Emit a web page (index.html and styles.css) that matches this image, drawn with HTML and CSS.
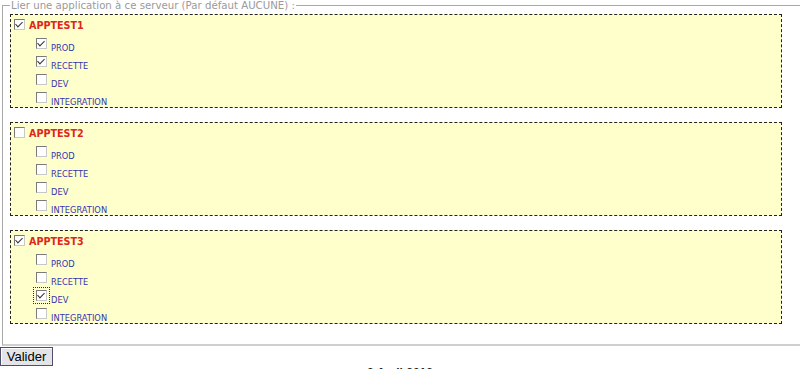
FILE: index.html
```html
<!DOCTYPE html>
<html lang="fr">
<head>
  <meta charset="UTF-8">
  <title>Lier une application</title>
  <link rel="stylesheet" href="styles.css">
</head>
<body>
  <form action="/serveur/apps" method="POST">
    <fieldset class="apps">
      <legend>Lier une application à ce serveur (Par défaut AUCUNE) :</legend>

      <div class="app">
        <label class="row app-title"><input type="checkbox" checked><span>APPTEST1</span></label>
        <div class="envs">
          <label class="row env"><input type="checkbox" checked><span>PROD</span></label>
          <label class="row env"><input type="checkbox" checked><span>RECETTE</span></label>
          <label class="row env"><input type="checkbox"><span>DEV</span></label>
          <label class="row env"><input type="checkbox"><span>INTEGRATION</span></label>
        </div>
      </div>

      <div class="app">
        <label class="row app-title"><input type="checkbox"><span>APPTEST2</span></label>
        <div class="envs">
          <label class="row env"><input type="checkbox"><span>PROD</span></label>
          <label class="row env"><input type="checkbox"><span>RECETTE</span></label>
          <label class="row env"><input type="checkbox"><span>DEV</span></label>
          <label class="row env"><input type="checkbox"><span>INTEGRATION</span></label>
        </div>
      </div>

      <div class="app">
        <label class="row app-title"><input type="checkbox" checked><span>APPTEST3</span></label>
        <div class="envs">
          <label class="row env"><input type="checkbox"><span>PROD</span></label>
          <label class="row env"><input type="checkbox"><span>RECETTE</span></label>
          <label class="row env"><input type="checkbox" class="focused" checked><span>DEV</span></label>
          <label class="row env"><input type="checkbox"><span>INTEGRATION</span></label>
        </div>
      </div>
    </fieldset>
    <input class="submit-button" type="submit" value="Valider">
  </form>
  <div class="footer">2 Avril 2013</div>
</body>
</html>
```

FILE: styles.css
```css
body {
  margin: 0;
  font-family: "DejaVu Sans", Verdana, sans-serif;
  background-color: #fff;
}
form {
  margin: 0;
}
.apps {
  margin: 0 0 0 2px;
  padding: 3px 18px 20px 7px;
  border: 1px solid #a8a8a8;
  border-right: none;
  border-bottom: 2px solid #cfcfcf;
  display: flex;
  flex-direction: column;
  gap: 14px;
}
.apps legend {
  padding: 0 1px;
  font-size: 10.2px;
  line-height: 11px;
  color: #9a9a9a;
}
.app {
  border: 1px dashed #222;
  background-color: #ffffcc;
  padding: 4px 2px 0 3px;
  height: 88px;
}
.row {
  display: flex;
  align-items: flex-end;
  height: 15px;
  cursor: pointer;
}
.row input[type="checkbox"] {
  appearance: none;
  -webkit-appearance: none;
  position: relative;
  width: 11px;
  height: 11px;
  margin: 0 4px 4px 0;
  align-self: flex-start;
  background-color: #fff;
  border: 1px solid #c8c8c8;
  border-top-color: #7a7a7a;
  border-left-color: #7a7a7a;
  flex-shrink: 0;
}
.row input[type="checkbox"]:checked::after {
  content: "";
  position: absolute;
  left: 2px;
  top: 0px;
  width: 3px;
  height: 6px;
  border: solid #333;
  border-width: 0 1.5px 1.5px 0;
  transform: rotate(45deg);
}
.row input.focused {
  outline: 1px dotted #333;
  outline-offset: 2px;
}
.app-title span {
  font-size: 9.6px;
  font-weight: bold;
  color: #e0261a;
  line-height: 11px;
  margin-bottom: 3px;
}
.envs {
  margin-top: 4px;
  padding-left: 22px;
  display: flex;
  flex-direction: column;
  gap: 3px;
}
.env span {
  font-size: 8.3px;
  line-height: 8px;
  color: #3434b0;
  margin-bottom: 1px;
}
.submit-button {
  margin: 1px 0 0 0;
  width: 53px;
  height: 19px;
  padding: 0;
  font-family: "Liberation Sans", Arial, sans-serif;
  font-size: 13px;
  color: #000;
  background-color: #e4e3e8;
  border: 1px solid #4e4e6e;
  box-shadow: inset 1px 1px 0 #fff;
  cursor: pointer;
}
.footer {
  text-align: center;
  font-family: "Liberation Sans", Arial, sans-serif;
  font-size: 12px;
  font-weight: bold;
  color: #222;
  margin-top: 0;
}
```
